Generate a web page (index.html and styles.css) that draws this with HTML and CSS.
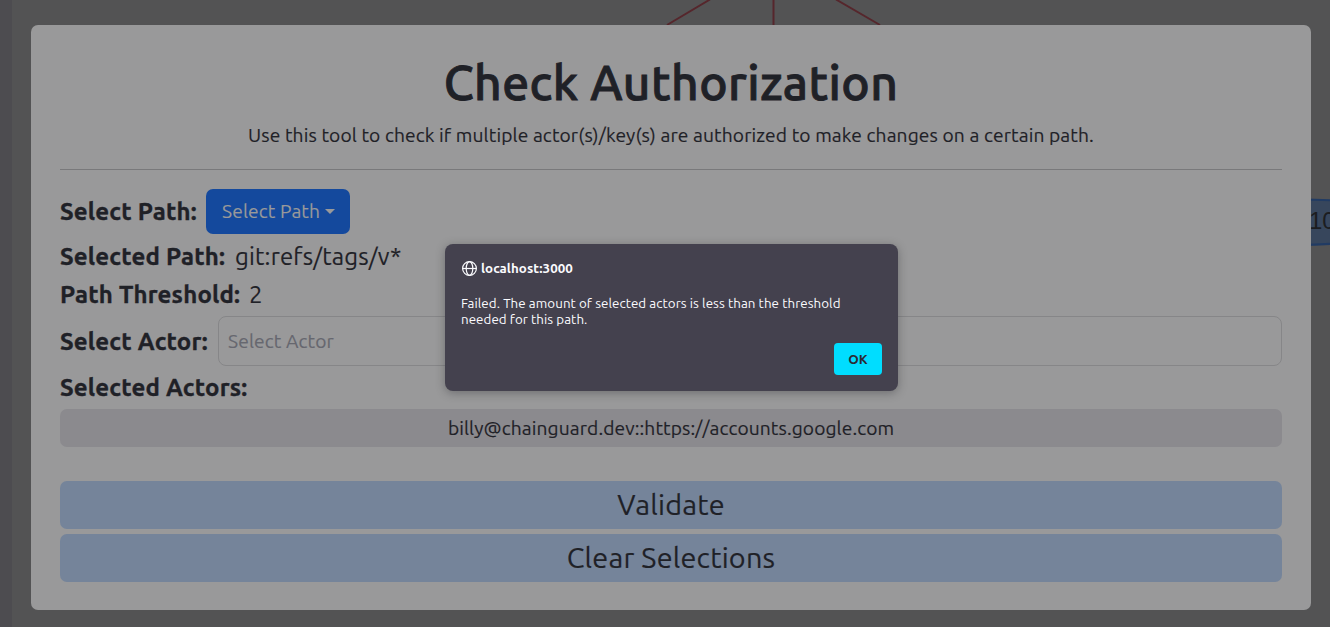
FILE: index.html
```html
<!DOCTYPE html>
<html lang="en">
<head>
<meta charset="utf-8">
<title>Check Authorization</title>
<link rel="stylesheet" href="styles.css">
</head>
<body>
<div class="page">
  <svg class="graph" width="1330" height="627" viewBox="0 0 1330 627">
    <path class="edge" d="M710 -.5 667 25M773.5 0V25M836 -.5 880 25"/>
    <path class="node" d="M1300 199.500Q1320 199.500 1340 201V243Q1320 245 1300 245Z"/>
    <text class="node-text" x="1309" y="228.500">10</text>
  </svg>
  <main class="panel">
    <h1 class="title"><span>Check Authorization</span></h1>
    <p class="intro"><span>Use this tool to check if multiple actor(s)/key(s) are authorized to make changes on a certain path.</span></p>
    <hr class="rule">
    <div class="row row-path"><b class="label l1">Select Path:</b><button class="dropdown"><span>Select Path</span><i class="caret"></i></button></div>
    <div class="row row-text"><b class="label l2">Selected Path:</b><span class="value">git:refs/tags/v*</span></div>
    <div class="row row-text"><b class="label l3">Path Threshold:</b><span class="value">2</span></div>
    <div class="row row-actor"><b class="label l4">Select Actor:</b><div class="field"><span>Select Actor</span></div></div>
    <div class="row row-text"><b class="label l5">Selected Actors:</b></div>
    <div class="actor"><span>billy@chainguard.dev::https://accounts.google.com</span></div>
    <div class="actions">
      <button class="action"><span class="a1">Validate</span></button>
      <button class="action"><span class="a2">Clear Selections</span></button>
    </div>
  </main>
  <section class="dialog" role="alertdialog">
    <header class="origin">
      <svg width="16" height="16" viewBox="0 0 16 16" fill="none" stroke="#fbfbfe" stroke-width="1.2"><circle cx="8.500" cy="8.500" r="6.900"/><ellipse cx="8.500" cy="8.500" rx="3.300" ry="6.900"/><path d="M1.500 8.500H15.500"/></svg>
      <b class="host">localhost:3000</b>
    </header>
    <p class="message"><span class="m1">Failed. The amount of selected actors is less than the threshold</span><br><span class="m2">needed for this path.</span></p>
    <button class="ok">OK</button>
  </section>
</div>
</body>
</html>
```
FILE: styles.css
```css
* { box-sizing: border-box; }
body { margin: 0; overflow: hidden; font-family: Ubuntu, "Noto Sans", sans-serif; font-weight: 400; color: #1f2127; -webkit-text-stroke: .15px; }
button { border: 0; font-family: inherit; font-weight: inherit; color: inherit; padding: 0; }
.page { position: relative; width: 1330px; height: 627px; padding: 25px 19px 17px 31px; background: linear-gradient(90deg, #4d4c50 12px, #535354 12px); }
.graph { position: absolute; left: 0; top: 0; }
.edge { stroke: #56262c; stroke-width: 2; fill: none; }
.node { fill: #37465c; stroke: #213b63; stroke-width: 2; }
.node-text { font: 24px "Liberation Sans", sans-serif; fill: #1c1d20; -webkit-text-stroke: 0; }
.panel { position: relative; height: 585px; padding: 29px; border-radius: 7px; background: #99999a; white-space: nowrap; }
.title { margin: 0; height: 57px; line-height: 57px; font-size: 48px; font-weight: 500; letter-spacing: .4px; text-align: center; -webkit-text-stroke: .9px; }
.intro { margin: 10px 0 0; height: 29px; line-height: 29px; font-size: 19.2px; letter-spacing: .12px; text-align: center; }
.rule { margin: 19px 0; height: 1px; border: 0; background: #79797b; }
.row { display: flex; align-items: center; height: 38px; font-size: 24px; letter-spacing: .17px; }
.row-text { padding-bottom: 2px; }
.row-path { height: 45px; margin-bottom: 4px; }
.row-actor { height: 50px; margin: 2px 0 3px; }
.label { flex: none; font-weight: 700; letter-spacing: .2px; -webkit-text-stroke: .35px; }
.l1 { width: 146px; }
.l2 { width: 175px; }
.l3 { width: 189px; }
.l4 { width: 158px; }
.dropdown { display: flex; align-items: center; width: 144px; height: 45px; padding: 0 0 1px 16px; gap: 5px; border-radius: 7px; background: #14499d; color: #99999a; font-size: 19.2px; letter-spacing: .12px; }
.caret { border: 5px solid transparent; border-top-color: #99999a; border-bottom: 0; }
.field { flex: 1; display: flex; align-items: center; height: 50px; padding-left: 9px; border: 1px solid #868688; border-radius: 8px; color: #66676f; font-size: 19.2px; letter-spacing: .12px; }
.actor { height: 38px; margin-top: 2px; line-height: 38px; border-radius: 7px; background: #8b8a8e; text-align: center; font-size: 19.2px; letter-spacing: .1px; }
.actions { display: grid; gap: 5px; margin-top: 34px; }
.action { height: 48px; padding-bottom: 2px; border-radius: 7px; background: #75849a; font-size: 28.8px; letter-spacing: .2px; line-height: 46px; }
.dialog { position: absolute; left: 445px; top: 244px; width: 453px; height: 147px; padding: 16px; display: flex; flex-direction: column; border-radius: 8px; background: #44414e; color: #fbfbfe; font-size: 13.33px; letter-spacing: .07px; line-height: 16px; white-space: nowrap; box-shadow: 0 2px 10px rgba(30,30,35,.35); -webkit-text-stroke: 0; }
.origin { display: flex; align-items: center; gap: 4px; height: 16px; }
.host { padding-top: 2px; }
.message { margin: 20px 0 0; }
.ok { align-self: flex-end; width: 48px; height: 32px; margin-top: 15px; border-radius: 4px; background: #00ddff; color: #2b2a33; font-size: 13.33px; font-weight: 700; letter-spacing: .07px; }
```
